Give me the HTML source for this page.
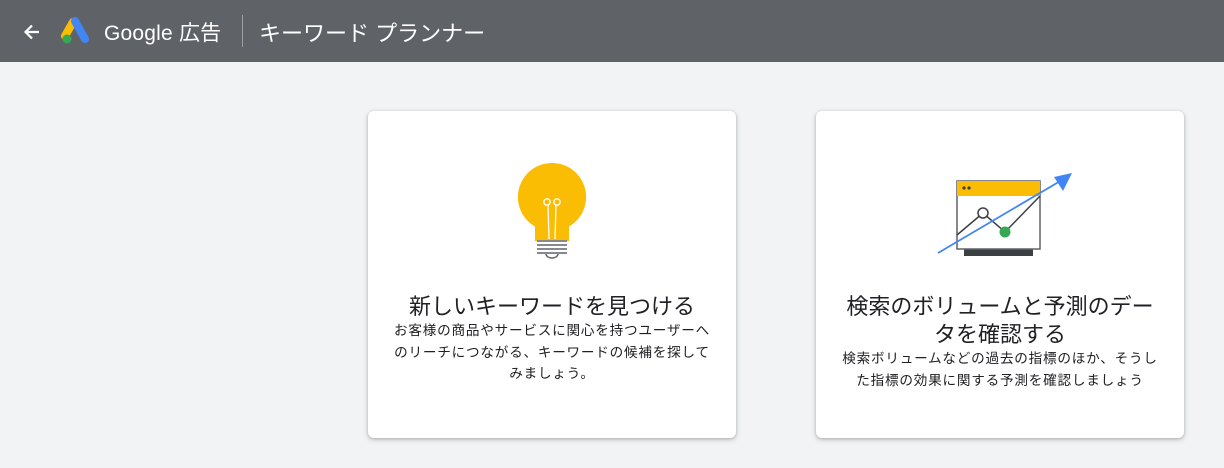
<!DOCTYPE html>
<html><head><meta charset="utf-8"><style>
body{margin:0;width:1224px;height:468px;background:#f1f3f4;font-family:"Liberation Sans","Noto Sans CJK JP",sans-serif;overflow:hidden;position:relative}
.hdr{position:absolute;left:0;top:0;width:1224px;height:62px;background:#5f6368;color:#fff}
.card{position:absolute;top:111px;width:368px;height:327px;background:#fff;border-radius:6px;box-shadow:0 1px 3px rgba(60,64,67,.3),0 2px 6px rgba(60,64,67,.15);text-align:center}
.t{position:absolute;left:0;right:0;font-size:22px;color:#202124;line-height:28px;white-space:nowrap}
.d{position:absolute;left:0;right:0;font-size:13.6px;letter-spacing:0.78px;color:#202124;line-height:21.5px;white-space:nowrap}
</style></head><body>
<div class="hdr">
<svg style="position:absolute;left:22px;top:22px" width="20" height="20" viewBox="0 0 20 20"><path d="M17 10H4M10 3.5L3.5 10 10 16.5" stroke="#fff" stroke-width="2.2" fill="none"/></svg>
<svg style="position:absolute;left:60px;top:16px" width="32" height="30" viewBox="0 0 32 30"><path d="M13 6L5 20" stroke="#fbbc04" stroke-width="8" stroke-linecap="round"/><path d="M15 5L25 23" stroke="#4285f4" stroke-width="8" stroke-linecap="round"/><circle cx="7" cy="23" r="4.5" fill="#34a853"/></svg>
<div style="position:absolute;left:104px;top:17px;font-size:21px;letter-spacing:0.2px">Google 広告</div>
<div style="position:absolute;left:242px;top:15px;width:1px;height:32px;background:#9aa0a6"></div>
<div style="position:absolute;left:259px;top:16px;font-size:22px">キーワード プランナー</div>
</div>
<div class="card" style="left:368px">
<svg style="position:absolute;left:140px;top:50px" width="90" height="100" viewBox="0 0 90 100">
<path d="M44 2a34 34 0 0 1 17 63.5V80H27V65.5A34 34 0 0 1 44 2z" fill="#fbbc04"/>
<circle cx="39" cy="41" r="3.2" fill="none" stroke="#fff" stroke-width="1.3"/><circle cx="49" cy="41" r="3.2" fill="none" stroke="#fff" stroke-width="1.3"/>
<path d="M40 44L41 78M48 44L47 78" stroke="#fff" stroke-width="1.3"/>
<rect x="29" y="79" width="30" height="13" fill="#fff"/>
<path d="M29 80H59M29 84H59M29 88H59M29 92H59" stroke="#5f6368" stroke-width="1.6"/>
<path d="M38 93a6 4 0 0 0 12 0" fill="none" stroke="#5f6368" stroke-width="1.4"/>
</svg>
<div class="t" style="top:182px">新しいキーワードを見つける</div>
<div class="d" style="top:209px">お客様の商品やサービスに関心を持つユーザーへ<br>のリーチにつながる、キーワードの候補を探して<br>みましょう。</div>
</div>
<div class="card" style="left:816px">
<svg style="position:absolute;left:110px;top:55px" width="170" height="100" viewBox="0 0 170 100">
<rect x="38" y="83" width="69" height="7" fill="#3c4043"/>
<rect x="31" y="15" width="83" height="68" fill="#fff" stroke="#5f6368" stroke-width="1.5"/>
<rect x="31" y="15" width="83" height="15" fill="#fbbc04"/>
<circle cx="38" cy="22" r="1.6" fill="#3c4043"/><circle cx="43" cy="22" r="1.6" fill="#3c4043"/>
<path d="M31 69L57 47L79 66L114 30" stroke="#3c4043" stroke-width="1.5" fill="none"/>
<path d="M12 87L136 14" stroke="#4285f4" stroke-width="1.8"/>
<path d="M146 7L128 11L137 25z" fill="#4285f4"/>
<circle cx="57" cy="47" r="5" fill="#fff" stroke="#3c4043" stroke-width="1.5"/>
<circle cx="79" cy="66" r="5.5" fill="#34a853"/>
</svg>
<div class="t" style="top:182px">検索のボリュームと予測のデー<br>タを確認する</div>
<div class="d" style="top:237px">検索ボリュームなどの過去の指標のほか、そうし<br>た指標の効果に関する予測を確認しましょう</div>
</div>
</body></html>
